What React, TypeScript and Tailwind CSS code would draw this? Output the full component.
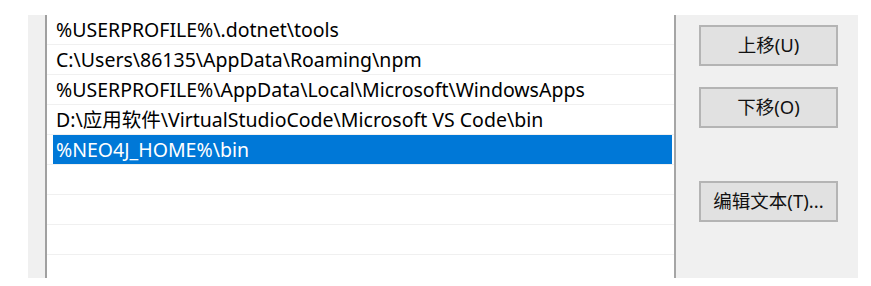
import React from "react";

const rows: string[] = [
  "%USERPROFILE%\\.dotnet\\tools",
  "C:\\Users\\86135\\AppData\\Roaming\\npm",
  "%USERPROFILE%\\AppData\\Local\\Microsoft\\WindowsApps",
  "D:\\应用软件\\VirtualStudioCode\\Microsoft VS Code\\bin",
  "%NEO4J_HOME%\\bin",
  "",
  "",
  "",
  "",
];

const font = { fontFamily: '"Noto Sans", "Noto Sans CJK SC", sans-serif' };

function Btn({ label, className = "" }: { label: string; className?: string }) {
  return (
    <div
      className={
        "ml-[23px] flex h-[41px] w-[139px] items-center justify-center border-2 border-[#b4b4b4] bg-[#e1e1e1] text-[18.5px] leading-none text-[#111] " +
        className
      }
    >
      {label}
    </div>
  );
}

export default function App() {
  return (
    <div className="h-[286px] w-[871px] bg-white pl-[28px] pt-[15px]" style={font}>
      <div className="flex h-[263px] w-[830px] bg-[#f0f0f0]">
        <div className="w-[17px]" />
        <div className="h-full w-[631px] overflow-hidden border-x-2 border-l-[#a0a0a0] border-r-[#a5a5a5] bg-white">
          {rows.map((r, i) => (
            <div key={i} className="h-[30px] border-b border-[#f0f0f0]">
              <div
                className={
                  "ml-[6px] mr-[2px] flex h-[29px] items-center whitespace-pre pl-[3px] text-[19.5px] leading-none " +
                  (i === 4 ? "bg-[#0078d7] text-white" : "text-black")
                }
              >
                {r}
              </div>
            </div>
          ))}
        </div>
        <div className="flex flex-1 flex-col pt-[10px]">
          <Btn label="上移(U)" />
          <Btn label="下移(O)" className="mt-[21px]" />
          <Btn label="编辑文本(T)..." className="mt-[53px]" />
        </div>
      </div>
    </div>
  );
}
